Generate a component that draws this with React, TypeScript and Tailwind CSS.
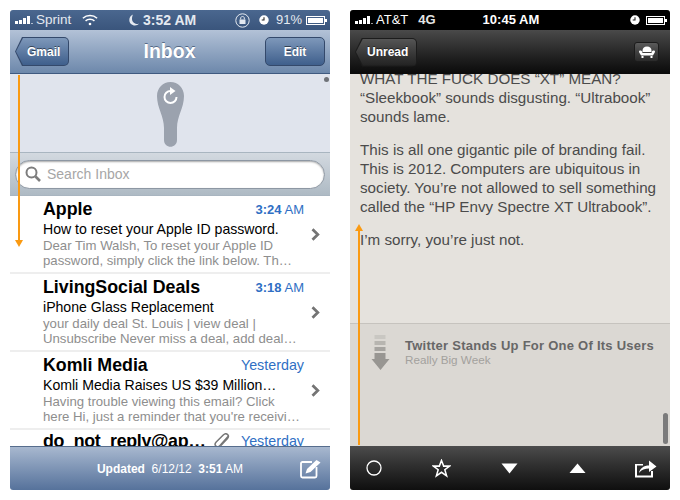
const FONT = "font-['Liberation_Sans',Arial,sans-serif]";

const mails = [
  {
    from: "Apple",
    time: "3:24",
    subject: "How to reset your Apple ID password.",
    l1: "Dear Tim Walsh, To reset your Apple ID",
    l2: "password, simply click the link below. Th…",
  },
  {
    from: "LivingSocial Deals",
    time: "3:18",
    subject: "iPhone Glass Replacement",
    l1: "your daily deal St. Louis | view deal |",
    l2: "Unsubscribe Never miss a deal, add deal…",
  },
  {
    from: "Komli Media",
    time: "",
    subject: "Komli Media Raises US $39 Million…",
    l1: "Having trouble viewing this email? Click",
    l2: "here Hi, just a reminder that you're receivi…",
  },
];

const Signal = () => (
  <svg width="19" height="8" viewBox="0 0 19 8" className="shrink-0 fill-white">
    <rect x="0" y="5" width="3" height="3" />
    <rect x="4" y="4" width="3" height="4" />
    <rect x="8" y="2" width="3" height="6" />
    <rect x="12" y="0" width="3" height="8" />
    <rect x="16" y="7" width="2" height="1" opacity="0.6" />
  </svg>
);

const Battery = () => (
  <svg width="21" height="9" viewBox="0 0 21 9" className="shrink-0">
    <rect x="0.5" y="0.5" width="18" height="8" fill="none" stroke="white" />
    <rect x="2" y="2" width="15" height="5" fill="white" />
    <rect x="19" y="3" width="2" height="3" fill="white" />
  </svg>
);

const Clock = () => (
  <svg width="10" height="10" viewBox="0 0 11 11" className="shrink-0">
    <circle cx="5.5" cy="5.5" r="5.2" fill="white" />
    <path d="M5.5 2.5V5.5H3" stroke="#222" strokeWidth="1.2" fill="none" />
  </svg>
);

const Wifi = () => (
  <svg width="16" height="12" viewBox="0 0 18 13" fill="none" stroke="white" strokeWidth="1.7">
    <path d="M1 4.5C5.5 0.5 12.5 0.5 17 4.5" />
    <path d="M4 7.5C6.8 5.2 11.2 5.2 14 7.5" />
    <circle cx="9" cy="11" r="1.5" fill="white" stroke="none" />
  </svg>
);

const Chevron = () => (
  <svg width="9" height="13" viewBox="0 0 9 13" fill="none" stroke="#757575" strokeWidth="2.8" className="absolute right-[10px] top-[32px]">
    <path d="M1.5 1.2L6.8 6.5L1.5 11.8" />
  </svg>
);

// Back button with the shallow point of the old iOS nav bar
const BackButton = ({ label, width, border, fill }: { label: string; width: string; border: string; fill: string }) => (
  <div className={`relative h-[29px] rounded-r-[5px] ${width} ${border} [clip-path:polygon(7px_0,100%_0,100%_100%,7px_100%,0_50%)]`}>
    <div className={`absolute inset-[1px] flex items-center rounded-r-[4px] pl-[11px] ${fill} [clip-path:polygon(7px_0,100%_0,100%_100%,7px_100%,0_50%)]`}>
      <span className="text-[12px] font-bold text-white [text-shadow:0_-1px_0_rgba(0,0,0,0.5)]">{label}</span>
    </div>
  </div>
);

const Inbox = () => (
  <div className="flex h-[480px] w-[320px] flex-col overflow-hidden rounded-[3px] bg-white">
    <div className="flex h-[20px] shrink-0 items-center bg-gradient-to-b from-[#4a678f] to-[#3a557c] pl-[5px] pr-[3px] text-[13.5px] text-[#e4e9f0]">
      <Signal />
      <span className="ml-[2px] w-[46px]">Sprint</span>
      <Wifi />
      <svg width="10" height="12" viewBox="0 0 10 12" className="ml-[31px]" fill="#e4e9f0">
        <path d="M4 0.5C1.5 1.5 0.3 3.6 0.3 6C0.3 9.2 3 11.5 6 11.5C7.6 11.5 9 10.9 9.8 9.8C6.8 10.4 3.2 8.6 3 5.2C2.9 3.4 3.4 1.8 4 0.5Z" />
      </svg>
      <span className="ml-[4px] text-[14px] font-bold">3:52 AM</span>
      <div className="ml-auto flex items-center">
        <svg width="15" height="15" viewBox="0 0 15 15" fill="none" stroke="#e4e9f0">
          <circle cx="7.5" cy="7.5" r="6.7" />
          <rect x="4.5" y="6.5" width="6" height="4.5" fill="#e4e9f0" stroke="none" />
          <path d="M5.7 6.5V5C5.7 3 9.3 3 9.3 5V6.5" />
        </svg>
        <span className="ml-[9px]"><Clock /></span>
        <span className="ml-[7px] text-[13px]">91%</span>
        <span className="ml-[4px]"><Battery /></span>
      </div>
    </div>
    <div className="flex h-[44px] shrink-0 items-center justify-between border-b border-[#3f5a80] bg-gradient-to-b from-[#b3c2d7] to-[#6d88ab] pl-[5px] pr-[5px]">
      <BackButton label="Gmail" width="w-[54px]" border="bg-[#34496b]" fill="bg-gradient-to-b from-[#7e98ba] to-[#3f5f8c]" />
      <span className="ml-[5px] text-[19.5px] font-bold text-white [text-shadow:0_-1px_0_rgba(40,60,90,0.6)]">Inbox</span>
      <div className="flex h-[29px] w-[60px] items-center justify-center rounded-[5px] border border-[#34496b] bg-gradient-to-b from-[#7e98ba] to-[#3f5f8c] text-[12px] font-bold text-white [text-shadow:0_-1px_0_rgba(0,0,0,0.5)]">
        Edit
      </div>
    </div>
    <div className="relative flex h-[78px] shrink-0 justify-center bg-[#e0e4ed] pt-[8px]">
      <svg width="27" height="66" viewBox="0 0 27 66">
        <path d="M13.5 0C21 0 27 6 27 14C27 26 20 34 20 46V58C20 67 7 67 7 58V46C7 34 0 26 0 14C0 6 6 0 13.5 0Z" fill="#9ba2ae" />
        <path d="M19.5 15A6 6 0 1 1 13.5 9" fill="none" stroke="white" strokeWidth="2" />
        <path d="M13 5L18.5 9L13 13Z" fill="white" />
      </svg>
      <div className="absolute right-[1px] top-[3px] h-[5px] w-[5px] rounded-full bg-[#6f7278]" />
    </div>
    <div className="flex h-[44px] shrink-0 items-center border-y border-[#a9b5c0] bg-gradient-to-b from-[#d3d9e0] to-[#aebac4] px-[5px]">
      <div className="flex h-[29px] w-full items-center rounded-full border border-[#8d97a3] bg-white pl-[9px] shadow-[inset_0_1px_2px_rgba(0,0,0,0.35)]">
        <svg width="16" height="16" viewBox="0 0 16 16" fill="none" stroke="#7d7d7d" strokeWidth="2">
          <circle cx="6.5" cy="6.5" r="5" />
          <path d="M10.5 10.5L15 15" strokeWidth="2.6" />
        </svg>
        <span className="ml-[6px] text-[14px] text-[#a6a6a6]">Search Inbox</span>
      </div>
    </div>
    {mails.map((m) => (
      <div key={m.from} className="relative h-[78px] shrink-0 border-b-2 border-[#eeeeee] pl-[33px] pr-[26px]">
        <div className="flex h-[25px] items-center justify-between">
          <span className="text-[17.8px] font-bold leading-[20px] text-black">{m.from}</span>
          <span className="pt-[3px] text-[13px] text-[#2f6fc4]">
            {m.time ? (
              <>
                <b>{m.time}</b> AM
              </>
            ) : (
              <span className="text-[14.3px]">Yesterday</span>
            )}
          </span>
        </div>
        <div className="mt-[1px] whitespace-nowrap text-[14.1px] leading-[15px] text-black">{m.subject}</div>
        <div className="mt-[1px] whitespace-nowrap text-[13.2px] leading-[15px] text-[#8e8e8e]">{m.l1}</div>
        <div className="whitespace-nowrap text-[13.2px] leading-[15px] text-[#8e8e8e]">{m.l2}</div>
        <Chevron />
      </div>
    ))}
    <div className="flex h-[16px] shrink-0 items-start overflow-hidden pl-[33px] pr-[26px]">
      <span className="whitespace-nowrap pt-[1px] text-[17.8px] font-bold leading-[20px] tracking-[-0.3px] text-black">do_not_reply@ap…</span>
      <svg width="16" height="17" viewBox="0 0 16 17" fill="none" stroke="#777" strokeWidth="1.5" className="ml-[8px] mt-[3px] shrink-0">
        <path d="M14 3.5L6 12.5C4.5 14.2 2.8 14 1.8 13C0.8 12 1 10.3 2.2 9L9.5 1.8C10.8 0.6 12.5 0.6 13.6 1.6C14.7 2.6 14.5 4.2 13.5 5.4L6.8 12.6" />
      </svg>
      <span className="ml-auto whitespace-nowrap pt-[1px] text-[14.3px] leading-[20px] text-[#2f6fc4]">Yesterday</span>
    </div>
    <div className="relative mt-auto flex h-[44px] shrink-0 items-center justify-center border-t border-[#566d8d] bg-gradient-to-b from-[#a8b8cf] to-[#56729b] text-[12px] text-white">
      <span>
        <b>Updated</b>&nbsp;&nbsp;6/12/12&nbsp;&nbsp;<b>3:51</b> AM
      </span>
      <svg width="22" height="20" viewBox="0 0 22 20" fill="none" stroke="white" className="absolute right-[8px] top-[12px]">
        <path d="M12 3H2.5C1.7 3 1 3.7 1 4.5V17C1 17.8 1.7 18.5 2.5 18.5H15C15.8 18.5 16.5 17.8 16.5 17V8" strokeWidth="1.8" />
        <path d="M5.5 14.5L7 10L16.5 1L20.5 3.5L10.5 13Z" fill="white" stroke="none" />
      </svg>
    </div>
  </div>
);

const ToolIcon = ({ children }: { children: React.ReactNode }) => (
  <div className="flex h-[24px] w-[24px] items-center justify-center">{children}</div>
);

const Article = () => (
  <div className="relative flex h-[480px] w-[320px] flex-col overflow-hidden rounded-[3px] bg-[#e5e2dd]">
    <div className="flex h-[20px] shrink-0 items-center bg-black pl-[5px] pr-[3px] text-[13px] text-white">
      <Signal />
      <span className="ml-[2px]">AT&amp;T</span>
      <span className="ml-[10px] font-bold text-[#e5e5e5]">4G</span>
      <span className="ml-[47px] font-bold">10:45 AM</span>
      <div className="ml-auto flex items-center gap-[6px]">
        <Clock />
        <Battery />
      </div>
    </div>
    <div className="flex h-[44px] shrink-0 items-center justify-between bg-gradient-to-b from-[#4a4a4a] to-[#0a0a0a] pl-[5px] pr-[11px]">
      <BackButton label="Unread" width="w-[62px]" border="bg-[#1c1c1c]" fill="bg-gradient-to-b from-[#555] to-[#222]" />
      <div className="flex h-[20px] w-[25px] items-center justify-center rounded-[3px] border border-[#1c1c1c] bg-gradient-to-b from-[#5a5a5a] to-[#2a2a2a]">
        <svg width="16" height="12" viewBox="0 0 16 12" fill="white">
          <path d="M3.5 5C3.5 2 5 0.5 8 0.5C11 0.5 12.5 2 12.5 5V6H3.5Z" />
          <path d="M0 5.5C0 4.2 2.4 4 3 5.5L3.5 7H12.5L13 5.5C13.6 4 16 4.2 16 5.5C16 7 14.5 8 14 9.5H2C1.5 8 0 7 0 5.5Z" />
          <rect x="2.5" y="10" width="2" height="2" />
          <rect x="11.5" y="10" width="2" height="2" />
        </svg>
      </div>
    </div>
    <div className="h-[249px] shrink-0 overflow-hidden pl-[10px] pr-[4px] text-[15.2px] leading-[19px] text-[#4b4b4b]">
      <p className="mt-[-5px] whitespace-nowrap">
        WHAT THE FUCK DOES “XT” MEAN?
        <br />
        “Sleekbook” sounds disgusting. “Ultrabook”
        <br />
        sounds lame.
      </p>
      <p className="mt-[14px] whitespace-nowrap">
        This is all one gigantic pile of branding fail.
        <br />
        This is 2012. Computers are ubiquitous in
        <br />
        society. You’re not allowed to sell something
        <br />
        called the “HP Envy Spectre XT Ultrabook”.
      </p>
      <p className="mt-[14px]">I’m sorry, you’re just not.</p>
    </div>
    <div className="relative flex h-[123px] shrink-0 border-t border-[#c6c3be] bg-[#dbd8d3] pl-[21px] pt-[11px]">
      <svg width="19" height="36" viewBox="0 0 19 36" className="shrink-0">
        <rect x="3.5" y="0" width="11" height="4" fill="#c9c7c2" />
        <rect x="3.5" y="6" width="11" height="4" fill="#b7b5b0" />
        <rect x="3.5" y="12" width="11" height="4" fill="#a6a4a0" />
        <path d="M3.5 18H14.5V24H18.5L9.5 35L0.5 24H3.5Z" fill="#989692" />
      </svg>
      <div className="ml-[15px] mt-[3px] whitespace-nowrap">
        <div className="text-[13px] font-bold leading-[15px] tracking-[0.25px] text-[#676767]">Twitter Stands Up For One Of Its Users</div>
        <div className="text-[11.7px] leading-[13px] text-[#a3a19d]">Really Big Week</div>
      </div>
      <div className="absolute bottom-[2px] right-[2px] h-[31px] w-[5px] rounded-full bg-[#7b7b7b]" />
    </div>
    <div className="flex h-[44px] shrink-0 items-center justify-between bg-gradient-to-b from-[#4c4c4c] to-[#0f0f0f] pl-[12px] pr-[13px]">
      <ToolIcon>
        <svg width="16" height="16" viewBox="0 0 16 16" fill="none" stroke="white" strokeWidth="1.3">
          <circle cx="8" cy="8" r="7" />
        </svg>
      </ToolIcon>
      <ToolIcon>
        <svg width="19" height="19" viewBox="0 0 20 20" fill="none" stroke="white" strokeWidth="1.6">
          <path d="M10 1.5L12.3 7.5H18.5L13.5 11.3L15.4 17.8L10 14L4.6 17.8L6.5 11.3L1.5 7.5H7.7Z" />
        </svg>
      </ToolIcon>
      <ToolIcon>
        <svg width="17" height="11" viewBox="0 0 17 11" fill="white">
          <path d="M0.5 0.5H16.5L8.5 10.5Z" />
        </svg>
      </ToolIcon>
      <ToolIcon>
        <svg width="17" height="10" viewBox="0 0 17 10" fill="white">
          <path d="M0.5 10H16.5L8.5 0.5Z" />
        </svg>
      </ToolIcon>
      <ToolIcon>
        <svg width="23" height="19" viewBox="0 0 23 19" fill="white">
          <path d="M1 5H9V6.5H3V16.5H17V12H19V18.5H1Z" />
          <path d="M5 14C6 9 10 6.5 15 6.5V1.5L22.5 7.5L15 13V9.5C11 9.5 7.5 10.5 5 14Z" />
        </svg>
      </ToolIcon>
    </div>
  </div>
);

// Orange scroll direction marks drawn over both phones
const DownArrow = () => (
  <div className="absolute left-[15px] top-[75px] flex flex-col items-center">
    <div className="h-[165px] w-[2px] bg-[#fa9a12]" />
    <div className="h-0 w-0 border-x-[4px] border-t-[7px] border-x-transparent border-t-[#fa9a12]" />
  </div>
);

const UpArrow = () => (
  <div className="absolute left-[355px] top-[224px] flex flex-col items-center">
    <div className="h-0 w-0 border-x-[4px] border-b-[7px] border-x-transparent border-b-[#fa9a12]" />
    <div className="h-[214px] w-[2px] bg-[#fa9a12]" />
  </div>
);

export default function App() {
  return (
    <div className={`relative flex h-[500px] w-[680px] gap-[20px] overflow-hidden bg-white p-[10px] ${FONT}`}>
      <Inbox />
      <Article />
      <DownArrow />
      <UpArrow />
    </div>
  );
}
